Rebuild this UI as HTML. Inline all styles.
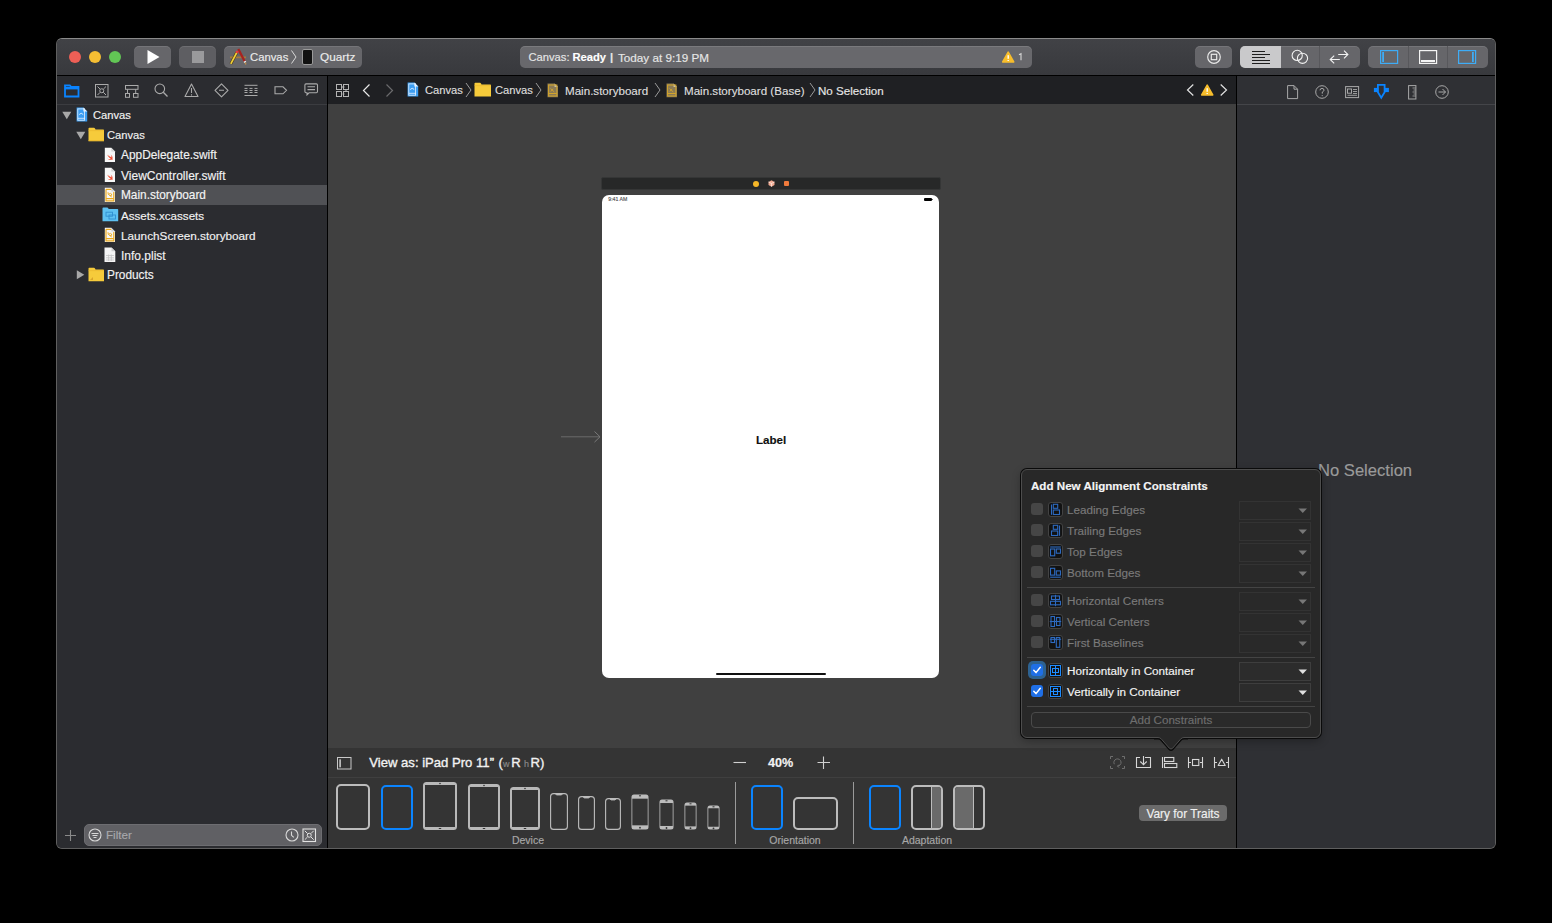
<!DOCTYPE html>
<html><head><meta charset="utf-8">
<style>
*{margin:0;padding:0;box-sizing:border-box}
html,body{width:1552px;height:923px;background:#000;overflow:hidden;font-family:"Liberation Sans",sans-serif}
.a{position:absolute}
#win{position:absolute;left:56px;top:38px;width:1440px;height:811px;border-radius:6px;overflow:hidden;background:#2b2c30;border:1px solid #5f5f5f;border-top-color:#8a8a8a}
.txt{white-space:nowrap;position:absolute;line-height:1;-webkit-text-stroke:0.15px currentColor}
svg{position:absolute;overflow:visible}
</style></head><body>
<div id="win">
  <!-- toolbar -->
  <div class="a" style="left:0;top:0;width:1438px;height:36px;background:linear-gradient(#414246,#38393d)"></div>
  <div class="a" style="left:0;top:36px;width:1438px;height:1px;background:#000"></div>
</div>
<!-- absolute page-coordinate layer -->
<div id="L" class="a" style="left:0;top:0;width:1552px;height:923px;clip-path:inset(39px 57px 75px 57px round 5px)">
  <!-- traffic lights -->
  <div class="a" style="left:69px;top:51px;width:12px;height:12px;border-radius:50%;background:#ed5f56"></div>
  <div class="a" style="left:89px;top:51px;width:12px;height:12px;border-radius:50%;background:#f5be33"></div>
  <div class="a" style="left:109px;top:51px;width:12px;height:12px;border-radius:50%;background:#62c655"></div>


  <!-- toolbar buttons -->
  <div class="a" style="left:134px;top:46px;width:37px;height:22px;border-radius:5px;background:#66666a;box-shadow:inset 0 1px 0 rgba(255,255,255,.1)"></div>
  <svg style="left:146px;top:49px" width="14" height="16"><path d="M1.5 1 L13.5 8 L1.5 15 Z" fill="#fff"/></svg>
  <div class="a" style="left:179px;top:46px;width:37px;height:22px;border-radius:5px;background:#5e5e62;box-shadow:inset 0 1px 0 rgba(255,255,255,.1)"></div>
  <div class="a" style="left:192px;top:51px;width:12px;height:12px;background:#9a9a9c"></div>
  <div class="a" style="left:224px;top:46px;width:138px;height:22px;border-radius:5px;background:#66666a;box-shadow:inset 0 1px 0 rgba(255,255,255,.1)"></div>
  <svg style="left:229px;top:48px" width="18" height="17">
    <path d="M1 9.3H17" stroke="#a57a3e" stroke-width="1.8"/>
    <path d="M9.3 1L15.6 13.2" stroke="#a8231f" stroke-width="2.3"/>
    <path d="M15.6 13.2L16.3 14.6" stroke="#f2f2f2" stroke-width="2.2"/>
    <path d="M16.3 14.6L16.8 16.5" stroke="#b88a4a" stroke-width="1.5"/>
    <path d="M7.8 4.5L1.8 15.8" stroke="#4a3210" stroke-width="2.8"/>
    <path d="M7.8 4.5L1.8 15.8" stroke="#f0d23a" stroke-width="1.7"/>
    <path d="M8.6 3L7.6 4.9" stroke="#e8353a" stroke-width="2.6"/>
  </svg>
  <div class="txt" style="left:250px;top:52px;font-size:11.3px;color:#ececec">Canvas</div>
  <svg style="left:291px;top:50px" width="6" height="14"><path d="M0.5 0.5 L5 7 L0.5 13.5" fill="none" stroke="#d8d8d8" stroke-width="1"/></svg>
  <div class="a" style="left:302px;top:49px;width:11px;height:16px;border-radius:2px;background:#111;border:1px solid #9a9a9a"></div>
  <div class="txt" style="left:320px;top:52px;font-size:11.8px;color:#ececec">Quartz</div>

  <!-- status -->
  <div class="a" style="left:520px;top:46px;width:512px;height:22px;border-radius:5px;background:#68686c;box-shadow:inset 0 1px 0 rgba(255,255,255,.12)"></div>
  <div class="txt" style="left:528.5px;top:52px;font-size:11.2px;color:#e6e6e6">Canvas:</div>
  <div class="txt" style="left:572.5px;top:52px;font-size:11.2px;color:#fff;font-weight:bold">Ready</div>
  <div class="txt" style="left:610px;top:52px;font-size:11.2px;color:#e8e8e8;font-weight:bold">|</div>
  <div class="txt" style="left:618px;top:52px;font-size:11.7px;color:#e6e6e6">Today at 9:19 PM</div>
  <svg style="left:1002px;top:51px" width="13" height="12"><path d="M6.2 1.2L11.7 11H0.7Z" fill="#f7bd2c" stroke="#f7bd2c" stroke-linejoin="round" stroke-width="1.6"/><rect x="5.5" y="4.2" width="1.4" height="3.6" fill="#fff"/><rect x="5.5" y="9" width="1.4" height="1" fill="#fff"/></svg>
  <svg style="left:1018px;top:53px" width="6" height="8"><path d="M1 1.8L3 0.6V7.2" fill="none" stroke="#d8d8d8" stroke-width="1.1"/></svg>

  <!-- library button -->
  <div class="a" style="left:1195px;top:46px;width:37px;height:22px;border-radius:5px;background:#66666a;box-shadow:inset 0 1px 0 rgba(255,255,255,.1)"></div>
  <svg style="left:1206px;top:49px" width="16" height="16"><circle cx="8" cy="8" r="6.3" fill="none" stroke="#e8e8e8" stroke-width="1.2"/><rect x="5.3" y="5.3" width="5.4" height="5.4" fill="none" stroke="#e8e8e8" stroke-width="1.2"/></svg>
  <!-- segmented 1 -->
  <div class="a" style="left:1240px;top:46px;width:120px;height:22px;border-radius:5px;background:#66666a;overflow:hidden;box-shadow:inset 0 1px 0 rgba(255,255,255,.1)">
    <div class="a" style="left:0;top:0;width:41px;height:22px;background:#c9c9cb"></div>
    <div class="a" style="left:79px;top:0;width:1px;height:22px;background:#58585c"></div>
  </div>
  <svg style="left:1240px;top:44px" width="120" height="26"><g fill="none" stroke-width="1.1">
  <path d="M12 7.5H25M12 10.5H30M12 13.5H25M12 16.5H30M12 19.5H30" stroke="#1e1e1e"/>
  <circle cx="57.2" cy="11.4" r="5.1" stroke="#f2f2f2"/><circle cx="62.5" cy="14.3" r="5.1" stroke="#f2f2f2"/>
  <path d="M98.2 10.5H107.8M104 6.6L107.9 10.5L104 14.4M99.8 15.5H90.2M94.2 11.6L90.2 15.5L94.2 19.4" stroke="#f2f2f2"/>
  </g></svg>
  <!-- segmented 2 -->
  <div class="a" style="left:1368px;top:46px;width:120px;height:22px;border-radius:5px;background:#66666a;box-shadow:inset 0 1px 0 rgba(255,255,255,.1)">
    <div class="a" style="left:40px;top:0;width:1px;height:22px;background:#58585c"></div>
    <div class="a" style="left:79px;top:0;width:1px;height:22px;background:#58585c"></div>
  </div>
  <svg style="left:1380px;top:50px" width="18" height="14"><rect x="0.6" y="0.6" width="17" height="12.8" fill="none" stroke="#3eacf6" stroke-width="1.2"/><rect x="2.2" y="2" width="1.8" height="10" fill="#3eacf6"/></svg>
  <svg style="left:1419px;top:50px" width="18" height="14"><rect x="0.6" y="0.6" width="17" height="12.8" fill="none" stroke="#f4f4f4" stroke-width="1.2"/><rect x="2" y="10" width="14" height="2" fill="#f4f4f4"/></svg>
  <svg style="left:1458px;top:50px" width="18" height="14"><rect x="0.6" y="0.6" width="17" height="12.8" fill="none" stroke="#3eacf6" stroke-width="1.2"/><rect x="14" y="2" width="1.8" height="10" fill="#3eacf6"/></svg>

  <!-- navigator -->
  <div class="a" style="left:57px;top:76px;width:270px;height:772px;background:#2b2c30"></div>
  <div class="a" style="left:57px;top:104px;width:270px;height:1px;background:#3b3c40"></div>
  <div class="a" style="left:57px;top:185px;width:270px;height:20px;background:#505155"></div>
  <div class="a" style="left:327px;top:76px;width:1px;height:772px;background:#000"></div>


  <!-- navigator tab icons -->
  <svg style="left:63px;top:83px" width="18" height="16"><path d="M2 2.4H6.8L8.2 3.8H15.5V13.5H2Z" fill="none" stroke="#0a84ff" stroke-width="1.8"/><rect x="2" y="3.8" width="13.5" height="2.6" fill="#0a84ff"/></svg>
  <svg style="left:95px;top:84px" width="14" height="14"><rect x="0.5" y="0.5" width="12.5" height="12.5" fill="none" stroke="#aaa" stroke-width="1"/><circle cx="6.75" cy="6.75" r="2" fill="none" stroke="#aaa" stroke-width="1"/><path d="M2.5 2.5L5.2 5.2M11 2.5L8.3 5.2M2.5 11L5.2 8.3M11 11L8.3 8.3" stroke="#aaa" stroke-width="1"/></svg>
  <svg style="left:125px;top:85px" width="14" height="13"><rect x="0.5" y="0.5" width="12.5" height="3.8" fill="none" stroke="#aaa"/><rect x="0.5" y="8.5" width="4" height="3.8" fill="none" stroke="#aaa"/><rect x="8.5" y="8.5" width="4.5" height="3.8" fill="none" stroke="#aaa"/><path d="M2.5 4.3V8.5M10.7 4.3V8.5" stroke="#aaa"/></svg>
  <svg style="left:154px;top:83px" width="15" height="15"><circle cx="5.8" cy="5.8" r="4.8" fill="none" stroke="#aaa" stroke-width="1.1"/><path d="M9.3 9.3L13.5 13.5" stroke="#aaa" stroke-width="1.3"/></svg>
  <svg style="left:184px;top:83px" width="15" height="15"><path d="M7.5 1L14 13.5H1Z" fill="none" stroke="#aaa" stroke-width="1.1" stroke-linejoin="round"/><path d="M7.5 5V10M7.5 11.3V12.5" stroke="#aaa" stroke-width="1.1"/></svg>
  <svg style="left:214px;top:83px" width="15" height="15"><path d="M7.5 0.8L14 7.3L7.5 13.8L1 7.3Z" fill="none" stroke="#aaa" stroke-width="1.1" stroke-linejoin="round"/><path d="M5 7.3H10" stroke="#aaa" stroke-width="1.1"/></svg>
  <svg style="left:244px;top:84px" width="15" height="13"><path d="M0.5 1.3H13.5M0.5 11.5H13.5M0.5 4.4H3.5M5.5 4.4H8.5M10.5 4.4H13.5M0.5 6.5H3.5M5.5 6.5H8.5M10.5 6.5H13.5M0.5 8.5H3.5M5.5 8.5H8.5M10.5 8.5H13.5" stroke="#aaa" stroke-width="1"/></svg>
  <svg style="left:274px;top:86px" width="15" height="9"><path d="M1 0.8H9L12.5 4.3L9 7.8H1Z" fill="none" stroke="#aaa" stroke-width="1.1"/></svg>
  <svg style="left:304px;top:83px" width="15" height="15"><path d="M2 0.9H12.3Q13.5 0.9 13.5 2.1V8.6Q13.5 9.8 12.3 9.8H5L3 11.8V9.8H2Q0.9 9.8 0.9 8.6V2.1Q0.9 0.9 2 0.9Z" fill="none" stroke="#aaa" stroke-width="1.1"/><path d="M3.5 3.7H11M3.5 6.6H11" stroke="#aaa" stroke-width="1.1"/></svg>

  <!-- tree -->
  <svg style="left:62px;top:111px" width="10" height="9"><path d="M0.3 0.8H9.3L4.8 8.3Z" fill="#a8a8a8"/></svg>
  <svg style="left:76px;top:107px" width="12" height="16"><path d="M0.6 0.6H7.4L11.2 4.4V14.6H0.6Z" fill="#3c9df1"/><path d="M7.4 0.6V4.4H11.2Z" fill="#eaf5ff"/><rect x="1.8" y="1.9" width="6.8" height="11.3" fill="none" stroke="#e8f3ff" stroke-width="0.8"/><path d="M2 11.3H9" stroke="#e8f3ff" stroke-width="0.8"/><path d="M3.2 7.5Q5.2 5 7.2 7.5" fill="none" stroke="#e8f3ff" stroke-width="0.9"/></svg>
  <div class="txt" style="left:93px;top:109.5px;font-size:11.2px;color:#f2f2f2">Canvas</div>

  <svg style="left:76px;top:131px" width="10" height="9"><path d="M0.3 0.8H9.3L4.8 8.3Z" fill="#a8a8a8"/></svg>
  <svg style="left:88px;top:127px" width="17" height="15"><path d="M0.5 1.5Q0.5 0.8 1.2 0.8H6Q6.6 0.8 7 1.5L7.5 2.5H15.3Q16 2.5 16 3.2V14.2H0.5Z" fill="#f6cb3b"/><path d="M0.5 3.6H16" stroke="#e7b52c" stroke-width="0.6"/><path d="M0.5 13.6H16" stroke="#e7b52c" stroke-width="0.8"/></svg>
  <div class="txt" style="left:107px;top:129.5px;font-size:11.2px;color:#f2f2f2">Canvas</div>

  <!-- swift files -->
  <svg style="left:104px;top:147px" width="12" height="16"><path d="M0.8 0.8H7.3L11 4.5V15H0.8Z" fill="#f7f7f7"/><path d="M7.3 0.8V4.5H11Z" fill="#d4d4d4"/><g transform="translate(2.3 6.6) scale(0.72)"><path d="M8.5 7.2C9.3 5.2 8.2 2.8 6 1.2C7 2.6 7.4 4.2 7 5.3C5.2 4.2 3 2.3 1.6 0.8C2.6 2.4 3.9 3.8 5 4.8C3.7 4.1 2.2 3 1 2C2.3 4 4.2 6 6.3 7.1C4.8 7.8 2.9 7.6 1.2 6.8C3 8.4 5.8 9.1 8 8.3C8.6 8.1 9.1 8.3 9.5 8.8C9.5 8.1 9.1 7.5 8.5 7.2Z" fill="#f04a2f"/></g></svg>
  <div class="txt" style="left:121px;top:149.5px;font-size:11.9px;color:#f2f2f2">AppDelegate.swift</div>
  <svg style="left:104px;top:167px" width="12" height="16"><path d="M0.8 0.8H7.3L11 4.5V15H0.8Z" fill="#f7f7f7"/><path d="M7.3 0.8V4.5H11Z" fill="#d4d4d4"/><g transform="translate(2.3 6.6) scale(0.72)"><path d="M8.5 7.2C9.3 5.2 8.2 2.8 6 1.2C7 2.6 7.4 4.2 7 5.3C5.2 4.2 3 2.3 1.6 0.8C2.6 2.4 3.9 3.8 5 4.8C3.7 4.1 2.2 3 1 2C2.3 4 4.2 6 6.3 7.1C4.8 7.8 2.9 7.6 1.2 6.8C3 8.4 5.8 9.1 8 8.3C8.6 8.1 9.1 8.3 9.5 8.8C9.5 8.1 9.1 7.5 8.5 7.2Z" fill="#f04a2f"/></g></svg>
  <div class="txt" style="left:121px;top:169.5px;font-size:12.0px;color:#f2f2f2">ViewController.swift</div>
  <!-- storyboard -->
  <svg style="left:104px;top:187px" width="12" height="16"><path d="M0.8 0.8H7.3L11 4.5V15H0.8Z" fill="#f7f7f7"/><path d="M2 2.3H7.5M2 2.3V13.8H9.8V5" fill="none" stroke="#eaaa1f" stroke-width="1.2"/><path d="M2 11.6H9.8" stroke="#eaaa1f" stroke-width="1.1"/><path d="M7.3 0.8V4.5H11Z" fill="#d4d4d4"/><path d="M4 5.2Q3.5 7.8 6 8.5Q8.2 9 7.6 7Q7 5.6 4.6 7.2M5.5 8.5L7.8 10" fill="none" stroke="#eaaa1f" stroke-width="0.9"/></svg>
  <div class="txt" style="left:121px;top:189.5px;font-size:11.85px;color:#f4f4f4">Main.storyboard</div>
  <!-- assets -->
  <svg style="left:102px;top:207px" width="17" height="15"><path d="M0.5 1.3Q0.5 0.5 1.3 0.5H5.5L6.8 2H15.5Q16.2 2 16.2 2.7V14.2H0.5Z" fill="#5ec1f1"/><rect x="4" y="5.2" width="6.5" height="4" fill="none" stroke="#2f8fd0" stroke-width="0.9"/><rect x="7" y="8" width="6.5" height="4" fill="none" stroke="#2f8fd0" stroke-width="0.9"/></svg>
  <div class="txt" style="left:121px;top:209.5px;font-size:11.6px;color:#f2f2f2">Assets.xcassets</div>
  <svg style="left:104px;top:227px" width="12" height="16"><path d="M0.8 0.8H7.3L11 4.5V15H0.8Z" fill="#f7f7f7"/><path d="M2 2.3H7.5M2 2.3V13.8H9.8V5" fill="none" stroke="#eaaa1f" stroke-width="1.2"/><path d="M2 11.6H9.8" stroke="#eaaa1f" stroke-width="1.1"/><path d="M7.3 0.8V4.5H11Z" fill="#d4d4d4"/><path d="M4 5.2Q3.5 7.8 6 8.5Q8.2 9 7.6 7Q7 5.6 4.6 7.2M5.5 8.5L7.8 10" fill="none" stroke="#eaaa1f" stroke-width="0.9"/></svg>
  <div class="txt" style="left:121px;top:229.5px;font-size:11.75px;color:#f2f2f2">LaunchScreen.storyboard</div>
  <!-- plist -->
  <svg style="left:104px;top:247px" width="12" height="16"><path d="M0.5 0.5H7.5L11.3 4.3V15H0.5Z" fill="#f4f4f4"/><path d="M7.5 0.5V4.3H11.3Z" fill="#cfcfcf"/><path d="M2 8.5H10M2 10.8H10M2 13H10M4.6 7.5V14M7.3 7.5V14" stroke="#c4c4c4" stroke-width="0.8"/></svg>
  <div class="txt" style="left:121px;top:249.5px;font-size:12.0px;color:#f2f2f2">Info.plist</div>
  <!-- products -->
  <svg style="left:76px;top:270px" width="9" height="10"><path d="M0.8 0.3V9.3L8.3 4.8Z" fill="#a8a8a8"/></svg>
  <svg style="left:88px;top:267px" width="17" height="15"><path d="M0.5 1.5Q0.5 0.8 1.2 0.8H6Q6.6 0.8 7 1.5L7.5 2.5H15.3Q16 2.5 16 3.2V14.2H0.5Z" fill="#f6cb3b"/><path d="M0.5 3.6H16" stroke="#e7b52c" stroke-width="0.6"/><path d="M2 13L5 10V13Z" fill="#d9a52a"/></svg>
  <div class="txt" style="left:107px;top:269.5px;font-size:11.85px;color:#f2f2f2">Products</div>

  <!-- filter bar -->
  <svg style="left:64px;top:829px" width="13" height="13"><path d="M6.5 1V12M1 6.5H12" stroke="#8a8a8a" stroke-width="1.1"/></svg>
  <div class="a" style="left:84px;top:824px;width:238px;height:22px;border-radius:5px;background:#606064;border:1px solid #6d6d71"></div>
  <svg style="left:88px;top:828px" width="15" height="15"><circle cx="7" cy="7" r="6" fill="none" stroke="#d8d8d8" stroke-width="1.1"/><path d="M3.5 5.5H10.5M4.5 7.5H9.5M5.5 9.5H8.5" stroke="#d8d8d8" stroke-width="1"/></svg>
  <div class="txt" style="left:106px;top:829px;font-size:11.6px;color:#a8a8ac">Filter</div>
  <svg style="left:285px;top:828px" width="15" height="15"><circle cx="7" cy="7" r="6" fill="none" stroke="#d8d8d8" stroke-width="1.1"/><path d="M6.5 3.5V7.3L8.8 9.3" fill="none" stroke="#d8d8d8" stroke-width="1.1"/></svg>
  <svg style="left:302px;top:828px" width="15" height="15"><rect x="1" y="1" width="12.5" height="12.5" fill="none" stroke="#e2e2e2" stroke-width="1.1"/><circle cx="7.25" cy="7.25" r="2" fill="none" stroke="#e2e2e2" stroke-width="1"/><path d="M2.8 2.8L5.5 5.5M11.7 2.8L9 5.5M2.8 11.7L5.5 9M11.7 11.7L9 9" stroke="#e2e2e2" stroke-width="1"/></svg>

  <!-- jump bar -->
  <div class="a" style="left:328px;top:76px;width:908px;height:28px;background:#1f2023"></div>
  <!-- canvas -->
  <div class="a" style="left:328px;top:104px;width:908px;height:644px;background:#404040"></div>
  <!-- bottom bar -->
  <div class="a" style="left:328px;top:748px;width:908px;height:100px;background:#343434"></div>
  <div class="a" style="left:328px;top:777px;width:908px;height:1px;background:#3f3f3f"></div>


  <!-- jump bar content -->
  <svg style="left:336px;top:84px" width="14" height="14"><rect x="0.5" y="0.5" width="5" height="5" fill="none" stroke="#b4b4b4"/><rect x="7.5" y="0.5" width="5" height="5" fill="none" stroke="#b4b4b4"/><rect x="0.5" y="7.5" width="5" height="5" fill="none" stroke="#b4b4b4"/><rect x="7.5" y="7.5" width="5" height="5" fill="none" stroke="#b4b4b4"/><path d="M5.5 3H8.5M6.5 10H8.5M10 5.5V8" stroke="#b4b4b4"/></svg>
  <svg style="left:362px;top:83px" width="9" height="15"><path d="M7.5 1.5L1.5 7.5L7.5 13.5" fill="none" stroke="#e8e8e8" stroke-width="1.2"/></svg>
  <svg style="left:385px;top:83px" width="9" height="15"><path d="M1.5 1.5L7.5 7.5L1.5 13.5" fill="none" stroke="#6a6a6c" stroke-width="1.2"/></svg>
  <svg style="left:407px;top:82px" width="12" height="16"><path d="M0.6 0.6H7.4L11.2 4.4V14.6H0.6Z" fill="#3c9df1"/><path d="M7.4 0.6V4.4H11.2Z" fill="#eaf5ff"/><rect x="1.8" y="1.9" width="6.8" height="11.3" fill="none" stroke="#e8f3ff" stroke-width="0.8"/><path d="M2 11.3H9" stroke="#e8f3ff" stroke-width="0.8"/><path d="M3.2 7.5Q5.2 5 7.2 7.5" fill="none" stroke="#e8f3ff" stroke-width="0.9"/></svg>
  <div class="txt" style="left:425px;top:85px;font-size:11.2px;color:#dedede">Canvas</div>
  <svg style="left:465px;top:82px" width="8" height="16"><path d="M1 1L6 8L1 15" fill="none" stroke="#9a9a9a" stroke-width="1"/></svg>
  <svg style="left:474px;top:82px" width="18" height="16"><path d="M0.5 1.5Q0.5 0.8 1.2 0.8H6Q6.6 0.8 7 1.5L7.5 2.5H16.3Q17 2.5 17 3.2V14.5H0.5Z" fill="#f6cb3b"/><path d="M0.5 3.6H17" stroke="#e7b52c" stroke-width="0.6"/></svg>
  <div class="txt" style="left:495px;top:85px;font-size:11.2px;color:#dedede">Canvas</div>
  <svg style="left:535px;top:82px" width="8" height="16"><path d="M1 1L6 8L1 15" fill="none" stroke="#9a9a9a" stroke-width="1"/></svg>
  <svg style="left:547px;top:83px" width="12" height="15"><path d="M0.5 0.5H7.5L11 4V14.3H0.5Z" fill="#8a7a55"/><path d="M7.5 0.5V4H11Z" fill="#c9c0a8"/><rect x="1.6" y="2" width="8.3" height="11" fill="none" stroke="#d4a52a" stroke-width="1"/><path d="M1.6 10.5H9.9" stroke="#d4a52a"/><path d="M3.5 5.5L7.3 9M3.8 8.5L6 5.8" stroke="#d4a52a" stroke-width="0.9"/></svg>
  <div class="txt" style="left:565px;top:84.5px;font-size:11.6px;color:#dedede">Main.storyboard</div>
  <svg style="left:654px;top:82px" width="8" height="16"><path d="M1 1L6 8L1 15" fill="none" stroke="#9a9a9a" stroke-width="1"/></svg>
  <svg style="left:666px;top:83px" width="12" height="15"><path d="M0.5 0.5H7.5L11 4V14.3H0.5Z" fill="#8a7a55"/><path d="M7.5 0.5V4H11Z" fill="#c9c0a8"/><rect x="1.6" y="2" width="8.3" height="11" fill="none" stroke="#d4a52a" stroke-width="1"/><path d="M1.6 10.5H9.9" stroke="#d4a52a"/><path d="M3.5 5.5L7.3 9M3.8 8.5L6 5.8" stroke="#d4a52a" stroke-width="0.9"/></svg>
  <div class="txt" style="left:684px;top:84.5px;font-size:11.6px;color:#dedede">Main.storyboard (Base)</div>
  <svg style="left:809px;top:82px" width="8" height="16"><path d="M1 1L6 8L1 15" fill="none" stroke="#9a9a9a" stroke-width="1"/></svg>
  <div class="txt" style="left:818px;top:84.5px;font-size:11.6px;color:#e6e6e6">No Selection</div>
  <svg style="left:1186px;top:83px" width="9" height="14"><path d="M7.3 1.5L1.5 7L7.3 12.5" fill="none" stroke="#e0e0e0" stroke-width="1.2"/></svg>
  <svg style="left:1201px;top:84px" width="13" height="12"><path d="M6.2 1.2L11.7 11H0.7Z" fill="#f7bd2c" stroke="#f7bd2c" stroke-linejoin="round" stroke-width="1.6"/><rect x="5.5" y="4.2" width="1.4" height="3.6" fill="#fff"/><rect x="5.5" y="9" width="1.4" height="1" fill="#fff"/></svg>
  <svg style="left:1219px;top:83px" width="9" height="14"><path d="M1.7 1.5L7.5 7L1.7 12.5" fill="none" stroke="#e0e0e0" stroke-width="1.2"/></svg>

  <!-- scene -->
  <div class="a" style="left:601px;top:177px;width:340px;height:13px;border-radius:2px;background:#272828;border:1px solid #353636"></div>
  <div class="a" style="left:753px;top:181px;width:6px;height:6px;border-radius:50%;background:#f6b728"></div>
  <svg style="left:768px;top:180px" width="7" height="7"><path d="M3.5 0.3L6.5 1.9V5.1L3.5 6.7L0.5 5.1V1.9Z" fill="#f0a890"/><path d="M0.5 1.9L3.5 3.5L6.5 1.9M3.5 3.5V6.7" fill="none" stroke="#fff" stroke-width="0.6"/></svg>
  <div class="a" style="left:784px;top:181px;width:5px;height:5px;border-radius:1px;background:#f07a3c"></div>
  <div class="a" style="left:602px;top:195px;width:337px;height:483px;border-radius:7px;background:#fff"></div>
  <div class="txt" style="left:608.3px;top:197.3px;font-size:5.2px;color:#555">9:41 AM</div>
  <div class="a" style="left:924px;top:198px;width:8px;height:3px;border-radius:1px;background:#000"></div>
  <div class="a" style="left:932px;top:199px;width:1px;height:1px;background:#666"></div>
  <div class="txt" style="left:756px;top:434px;font-size:11.6px;color:#111;font-weight:bold">Label</div>
  <div class="a" style="left:716px;top:673px;width:110px;height:2px;border-radius:1px;background:#111"></div>
  <svg style="left:560px;top:430px" width="44" height="14"><path d="M1 6.8H40" stroke="#6a6a6a" stroke-width="1"/><path d="M34.5 1.5L40 6.8L34.5 12.1" fill="none" stroke="#7a7a7a" stroke-width="1"/></svg>


  <!-- bottom bar content -->
  <svg style="left:337px;top:757px" width="15" height="13"><rect x="0.5" y="0.5" width="13.5" height="11.5" fill="none" stroke="#c8c8c8" stroke-width="1"/><rect x="2.3" y="2.3" width="1.6" height="8" fill="#c8c8c8"/></svg>
  <div class="txt" style="left:369.3px;top:755.5px;font-size:13.1px;color:#f2f2f2;-webkit-text-stroke:0.35px #f2f2f2">View as: iPad Pro 11”</div>
  <div class="txt" style="left:498.5px;top:755.5px;font-size:13.1px;color:#f2f2f2;-webkit-text-stroke:0.35px #f2f2f2">(</div>
  <div class="txt" style="left:503px;top:759.5px;font-size:9px;color:#8a8a8a">w</div>
  <div class="txt" style="left:511.2px;top:755.5px;font-size:13.1px;color:#f2f2f2;-webkit-text-stroke:0.35px #f2f2f2">R</div>
  <div class="txt" style="left:524px;top:759.5px;font-size:9px;color:#8a8a8a">h</div>
  <div class="txt" style="left:530.5px;top:755.5px;font-size:13.1px;color:#f2f2f2;-webkit-text-stroke:0.35px #f2f2f2">R)</div>
  <svg style="left:733px;top:756px" width="14" height="13"><path d="M0.5 6.5H13" stroke="#d0d0d0" stroke-width="1.1"/></svg>
  <div class="txt" style="left:768px;top:756.5px;font-size:12.6px;color:#f2f2f2;font-weight:bold">40%</div>
  <svg style="left:817px;top:756px" width="14" height="14"><path d="M6.5 0.5V13M0.5 6.5H13" stroke="#d0d0d0" stroke-width="1.1"/></svg>
  <svg style="left:1109px;top:755px" width="17" height="15"><path d="M1.5 4V1.5H4M13 1.5H15.5V4M15.5 11V13.5H13M4 13.5H1.5V11" fill="none" stroke="#6e6e6e" stroke-width="1"/><path d="M8.5 11.1A3.6 3.6 0 1 0 5.3 9.2" fill="none" stroke="#6e6e6e" stroke-width="1"/><path d="M10 9.6L8.5 11.1L10 12.6" fill="none" stroke="#6e6e6e" stroke-width="1"/></svg>
  <svg style="left:1130px;top:750px" width="105" height="25"><g fill="none" stroke="#d6d6d6" stroke-width="1.1">
  <path d="M10 7.5H6.5V17.5H20.5V7.5H15"/><path d="M13.5 6V14.8M10.3 11.5L13.5 14.8L16.7 11.5"/>
  <path d="M32.5 7V18"/><rect x="34.5" y="7.5" width="9.3" height="4"/><rect x="34.5" y="13.5" width="12.3" height="4"/>
  <path d="M58.5 7V18M72.5 7V18M58.5 12.5H61M70 12.5H72.5"/><rect x="62.5" y="9.5" width="6.3" height="6"/>
  <path d="M84.5 7V18M98.5 7V18M84.5 12.5H87M96 12.5H98.5"/><path d="M91.7 9.2L95.2 15.5H88.2Z" stroke-linejoin="round"/>
  </g></svg>
  <div class="a" style="left:336px;top:784px;width:34px;height:46px;border-radius:5px;border:2.2px solid #bcbcbc"></div>
  <div class="a" style="left:381px;top:785px;width:32px;height:45px;border-radius:5px;border:2.2px solid #0a84ff"></div>
  <svg style="left:423px;top:782px" width="34" height="48"><rect x="0" y="0" width="34" height="48" rx="3.5" fill="#b8b8b8"/><rect x="2" y="3" width="30" height="42" fill="#343434"/><circle cx="17.0" cy="1.5" r="0.8" fill="#343434"/><rect x="15.7" y="46" width="2.6" height="1" rx="0.5" fill="#343434"/></svg>
  <svg style="left:468px;top:784px" width="32" height="46"><rect x="0" y="0" width="32" height="46" rx="3.5" fill="#b8b8b8"/><rect x="2" y="3" width="28" height="40" fill="#343434"/><circle cx="16.0" cy="1.5" r="0.8" fill="#343434"/><rect x="14.7" y="44" width="2.6" height="1" rx="0.5" fill="#343434"/></svg>
  <svg style="left:510px;top:787px" width="30" height="43"><rect x="0" y="0" width="30" height="43" rx="3.5" fill="#b8b8b8"/><rect x="2" y="3" width="26" height="37" fill="#343434"/><circle cx="15.0" cy="1.5" r="0.8" fill="#343434"/><rect x="13.7" y="41" width="2.6" height="1" rx="0.5" fill="#343434"/></svg>
  <svg style="left:550px;top:793px" width="18" height="37"><rect x="0.6" y="0.6" width="16.8" height="35.8" rx="3" fill="none" stroke="#bcbcbc" stroke-width="1.1"/><path d="M5.3999999999999995 0.9H12.6L11.16 2H6.84Z" fill="#bcbcbc" stroke="#bcbcbc" stroke-width="0.8"/></svg>
  <svg style="left:578px;top:796px" width="17" height="34"><rect x="0.6" y="0.6" width="15.8" height="32.8" rx="3" fill="none" stroke="#bcbcbc" stroke-width="1.1"/><path d="M5.1 0.9H11.899999999999999L10.54 2H6.46Z" fill="#bcbcbc" stroke="#bcbcbc" stroke-width="0.8"/></svg>
  <svg style="left:605px;top:798px" width="16" height="32"><rect x="0.6" y="0.6" width="14.8" height="30.8" rx="3" fill="none" stroke="#bcbcbc" stroke-width="1.1"/><path d="M4.8 0.9H11.2L9.92 2H6.08Z" fill="#bcbcbc" stroke="#bcbcbc" stroke-width="0.8"/></svg>
  <svg style="left:631px;top:794px" width="18" height="36"><rect x="0.5" y="0.5" width="17" height="35" rx="2.5" fill="#bcbcbc"/><rect x="1.3" y="4.68" width="15.4" height="26.64" fill="#343434"/><rect x="8.0" y="1.3" width="2" height="1" fill="#343434"/><circle cx="9.0" cy="33.66" r="0.9" fill="#343434"/></svg>
  <svg style="left:659px;top:799px" width="15" height="31"><rect x="0.5" y="0.5" width="14" height="30" rx="2.5" fill="#bcbcbc"/><rect x="1.3" y="4.03" width="12.4" height="22.94" fill="#343434"/><rect x="6.5" y="1.3" width="2" height="1" fill="#343434"/><circle cx="7.5" cy="28.985" r="0.9" fill="#343434"/></svg>
  <svg style="left:684px;top:802px" width="13" height="28"><rect x="0.5" y="0.5" width="12" height="27" rx="2.5" fill="#bcbcbc"/><rect x="1.3" y="3.64" width="10.4" height="20.72" fill="#343434"/><rect x="5.5" y="1.3" width="2" height="1" fill="#343434"/><circle cx="6.5" cy="26.18" r="0.9" fill="#343434"/></svg>
  <svg style="left:707px;top:805px" width="13" height="25"><rect x="0.5" y="0.5" width="12" height="24" rx="2.5" fill="#bcbcbc"/><rect x="1.3" y="3.25" width="10.4" height="18.5" fill="#343434"/><rect x="5.5" y="1.3" width="2" height="1" fill="#343434"/><circle cx="6.5" cy="23.375" r="0.9" fill="#343434"/></svg>
  <div class="a" style="left:735px;top:782px;width:1px;height:62px;background:#9a9a9a"></div>
  <div class="a" style="left:853px;top:782px;width:1px;height:62px;background:#9a9a9a"></div>
  <div class="txt" style="left:528px;top:835px;font-size:10.5px;color:#a8a8a8;transform:translateX(-50%)">Device</div>
  <div class="txt" style="left:795px;top:835px;font-size:10.5px;color:#a8a8a8;transform:translateX(-50%)">Orientation</div>
  <div class="txt" style="left:927px;top:835px;font-size:10.5px;color:#a8a8a8;transform:translateX(-50%)">Adaptation</div>
  <div class="a" style="left:751px;top:785px;width:32px;height:45px;border-radius:5px;border:2.2px solid #0a84ff"></div>
  <div class="a" style="left:793px;top:797px;width:45px;height:33px;border-radius:5px;border:2.2px solid #bcbcbc"></div>
  <div class="a" style="left:869px;top:785px;width:32px;height:45px;border-radius:5px;border:2.2px solid #0a84ff"></div>
  <div class="a" style="left:911px;top:785px;width:32px;height:45px;border-radius:5px;border:2.2px solid #bcbcbc;overflow:hidden"><div class="a" style="left:18px;top:0;width:1.3px;height:41px;background:#bcbcbc"></div><div class="a" style="left:19.3px;top:0;width:10px;height:41px;background:#6a6a6a"></div></div>
  <div class="a" style="left:953px;top:785px;width:32px;height:45px;border-radius:5px;border:2.2px solid #bcbcbc;overflow:hidden"><div class="a" style="left:0;top:0;width:17.5px;height:41px;background:#6a6a6a"></div><div class="a" style="left:17.5px;top:0;width:1.3px;height:41px;background:#bcbcbc"></div></div>
  <div class="a" style="left:1139px;top:805px;width:88px;height:16px;border-radius:4px;background:#6b6b6b"></div>
  <div class="txt" style="left:1139px;top:808.5px;width:88px;text-align:center;font-size:11.9px;color:#f0f0f0">Vary for Traits</div>

  <!-- inspector -->
  <div class="a" style="left:1236px;top:76px;width:1px;height:772px;background:#000"></div>
  <div class="a" style="left:1237px;top:76px;width:258px;height:772px;background:#2f3034"></div>
  <div class="a" style="left:1237px;top:104px;width:258px;height:1px;background:#444549"></div>

  <!-- inspector content -->
  <svg style="left:1287px;top:85px" width="12" height="15"><path d="M0.6 0.6H7L10.6 4.2V13.6H0.6Z M7 0.6V4.2H10.6" fill="none" stroke="#a8a8a8" stroke-width="1"/></svg>
  <svg style="left:1314.5px;top:85px" width="15" height="15"><circle cx="7" cy="7" r="6.3" fill="none" stroke="#a8a8a8" stroke-width="1"/><path d="M5 5.3Q5 3.4 7 3.4Q9 3.4 9 5.2Q9 6.3 7.3 7V8.6" fill="none" stroke="#a8a8a8" stroke-width="1"/><circle cx="7.2" cy="10.6" r="0.6" fill="#a8a8a8"/></svg>
  <svg style="left:1344.5px;top:85.5px" width="15" height="13"><rect x="0.6" y="0.6" width="13" height="11" fill="none" stroke="#a8a8a8" stroke-width="1"/><rect x="2.5" y="3" width="4" height="4.2" fill="none" stroke="#a8a8a8" stroke-width="1"/><path d="M8 3.5H12M8 5.5H12M8 7.5H12M2.5 9.3H12" stroke="#a8a8a8" stroke-width="0.9"/></svg>
  <svg style="left:1373px;top:84px" width="17" height="16"><path d="M4.9 0.9H11.6V8.3L8.25 13.8L4.9 8.3Z" fill="none" stroke="#0a84ff" stroke-width="1.8" stroke-linejoin="miter"/><rect x="0.9" y="3.9" width="4.5" height="4.2" fill="#0a84ff"/><rect x="11.1" y="3.9" width="4.8" height="4.2" fill="#0a84ff"/></svg>
  <svg style="left:1407.5px;top:85px" width="9" height="15"><rect x="0.6" y="0.6" width="7.3" height="13.4" fill="none" stroke="#a8a8a8" stroke-width="1"/><path d="M4.5 3H7.8M5.5 5H7.8M4.5 7H7.8M5.5 9H7.8M4.5 11H7.8" stroke="#a8a8a8" stroke-width="0.8"/></svg>
  <svg style="left:1434.5px;top:85px" width="15" height="15"><circle cx="7" cy="7" r="6.3" fill="none" stroke="#a8a8a8" stroke-width="1"/><path d="M3.5 7H10.5M7.5 4L10.5 7L7.5 10" fill="none" stroke="#a8a8a8" stroke-width="1"/></svg>
  <div class="txt" style="left:1318px;top:463px;font-size:16.6px;color:#9a9a9a">No Selection</div>

  <!-- popover -->
  <div class="a" style="left:1021px;top:469px;width:300px;height:269px;border-radius:6px;background:#282828;border:1px solid #4d4d4d;box-shadow:0 0 0 1px #0a0a0a,0 3px 10px rgba(0,0,0,.3)"></div>
  <svg style="left:1154px;top:735px" width="34" height="18"><path d="M0 2.5H4Q6 2.5 7.5 4.2L15.3 13.2Q17 15 18.7 13.2L26.5 4.2Q28 2.5 30 2.5H34" fill="none" stroke="#0a0a0a" stroke-width="2.2" transform="translate(0 0.9)"/><path d="M0 2.5H4Q6 2.5 7.5 4.2L15.3 13.2Q17 15 18.7 13.2L26.5 4.2Q28 2.5 30 2.5H34V0H0Z" fill="#282828"/><path d="M0 2.5H4Q6 2.5 7.5 4.2L15.3 13.2Q17 15 18.7 13.2L26.5 4.2Q28 2.5 30 2.5H34" fill="none" stroke="#4d4d4d" stroke-width="1"/></svg>
  <div class="txt" style="left:1031px;top:480px;font-size:11.6px;color:#f4f4f4;font-weight:bold">Add New Alignment Constraints</div>
  <div class="a" style="left:1027px;top:587px;width:288px;height:1px;background:#444"></div>
  <div class="a" style="left:1027px;top:657px;width:288px;height:1px;background:#444"></div>
  <div class="a" style="left:1027px;top:706px;width:288px;height:1px;background:#444"></div>
  <div class="a" style="left:1031px;top:712px;width:280px;height:16px;border-radius:4px;border:1px solid #4a4a4a;background:#2a2a2a"></div>
  <div class="txt" style="left:1031px;top:713.5px;width:280px;text-align:center;font-size:11.6px;color:#6e6e6e">Add Constraints</div>
  <div class="a" style="left:1031px;top:503px;width:12px;height:12px;border-radius:3px;background:#464646"></div>
  <div class="a" style="left:1048px;top:501.5px;width:15px;height:15px;border-radius:3px;background:#121212;border:1px solid #434343"></div>
  <svg style="left:1048px;top:501.5px" width="15" height="15"><path d="M3.5 2.5V12.8" stroke="#2d6ac0" stroke-width="1.1"/><rect x="5.3" y="2.3" width="4.4" height="4" fill="none" stroke="#2d6ac0" stroke-width="1.1"/><rect x="5.3" y="8" width="6.2" height="4.5" fill="none" stroke="#2d6ac0" stroke-width="1.1"/></svg>
  <div class="txt" style="left:1067px;top:504.4px;font-size:11.7px;color:#7a7a7a">Leading Edges</div>
  <div class="a" style="left:1239px;top:501px;width:72px;height:19px;border:1px solid #333;background:#292929"></div>
  <svg style="left:1298px;top:508px" width="10" height="6"><path d="M0.5 0.5H9L4.75 5Z" fill="#777"/></svg>
  <div class="a" style="left:1031px;top:524px;width:12px;height:12px;border-radius:3px;background:#464646"></div>
  <div class="a" style="left:1048px;top:522.5px;width:15px;height:15px;border-radius:3px;background:#121212;border:1px solid #434343"></div>
  <svg style="left:1048px;top:522.5px" width="15" height="15"><path d="M11.5 2.5V12.8" stroke="#2d6ac0" stroke-width="1.1"/><rect x="5.3" y="2.3" width="4.4" height="4" fill="none" stroke="#2d6ac0" stroke-width="1.1"/><rect x="3.5" y="8" width="6.2" height="4.5" fill="none" stroke="#2d6ac0" stroke-width="1.1"/></svg>
  <div class="txt" style="left:1067px;top:525.4px;font-size:11.7px;color:#7a7a7a">Trailing Edges</div>
  <div class="a" style="left:1239px;top:522px;width:72px;height:19px;border:1px solid #333;background:#292929"></div>
  <svg style="left:1298px;top:529px" width="10" height="6"><path d="M0.5 0.5H9L4.75 5Z" fill="#777"/></svg>
  <div class="a" style="left:1031px;top:545px;width:12px;height:12px;border-radius:3px;background:#464646"></div>
  <div class="a" style="left:1048px;top:543.5px;width:15px;height:15px;border-radius:3px;background:#121212;border:1px solid #434343"></div>
  <svg style="left:1048px;top:543.5px" width="15" height="15"><path d="M2.2 3H12.8" stroke="#2d6ac0" stroke-width="1.1"/><rect x="2.5" y="5" width="4.2" height="6.8" fill="none" stroke="#2d6ac0" stroke-width="1.1"/><rect x="8.3" y="5" width="4.2" height="4.2" fill="none" stroke="#2d6ac0" stroke-width="1.1"/></svg>
  <div class="txt" style="left:1067px;top:546.4px;font-size:11.7px;color:#7a7a7a">Top Edges</div>
  <div class="a" style="left:1239px;top:543px;width:72px;height:19px;border:1px solid #333;background:#292929"></div>
  <svg style="left:1298px;top:550px" width="10" height="6"><path d="M0.5 0.5H9L4.75 5Z" fill="#777"/></svg>
  <div class="a" style="left:1031px;top:566px;width:12px;height:12px;border-radius:3px;background:#464646"></div>
  <div class="a" style="left:1048px;top:564.5px;width:15px;height:15px;border-radius:3px;background:#121212;border:1px solid #434343"></div>
  <svg style="left:1048px;top:564.5px" width="15" height="15"><path d="M2.2 12.2H12.8" stroke="#2d6ac0" stroke-width="1.1"/><rect x="2.5" y="3.3" width="4.2" height="6.8" fill="none" stroke="#2d6ac0" stroke-width="1.1"/><rect x="8.3" y="5.9" width="4.2" height="4.2" fill="none" stroke="#2d6ac0" stroke-width="1.1"/></svg>
  <div class="txt" style="left:1067px;top:567.4px;font-size:11.7px;color:#7a7a7a">Bottom Edges</div>
  <div class="a" style="left:1239px;top:564px;width:72px;height:19px;border:1px solid #333;background:#292929"></div>
  <svg style="left:1298px;top:571px" width="10" height="6"><path d="M0.5 0.5H9L4.75 5Z" fill="#777"/></svg>
  <div class="a" style="left:1031px;top:594px;width:12px;height:12px;border-radius:3px;background:#464646"></div>
  <div class="a" style="left:1048px;top:592.5px;width:15px;height:15px;border-radius:3px;background:#121212;border:1px solid #434343"></div>
  <svg style="left:1048px;top:592.5px" width="15" height="15"><path d="M7.5 1.8V13.2" stroke="#2d6ac0" stroke-width="1.1"/><rect x="3.5" y="3" width="8" height="3.5" fill="none" stroke="#2d6ac0" stroke-width="1.1"/><rect x="2.5" y="8.3" width="10" height="3.5" fill="none" stroke="#2d6ac0" stroke-width="1.1"/></svg>
  <div class="txt" style="left:1067px;top:595.4px;font-size:11.7px;color:#7a7a7a">Horizontal Centers</div>
  <div class="a" style="left:1239px;top:592px;width:72px;height:19px;border:1px solid #333;background:#292929"></div>
  <svg style="left:1298px;top:599px" width="10" height="6"><path d="M0.5 0.5H9L4.75 5Z" fill="#777"/></svg>
  <div class="a" style="left:1031px;top:615px;width:12px;height:12px;border-radius:3px;background:#464646"></div>
  <div class="a" style="left:1048px;top:613.5px;width:15px;height:15px;border-radius:3px;background:#121212;border:1px solid #434343"></div>
  <svg style="left:1048px;top:613.5px" width="15" height="15"><path d="M1.8 7.5H13.2" stroke="#2d6ac0" stroke-width="1.1"/><rect x="3" y="2.5" width="3.5" height="10" fill="none" stroke="#2d6ac0" stroke-width="1.1"/><rect x="8.5" y="3.5" width="3.5" height="8" fill="none" stroke="#2d6ac0" stroke-width="1.1"/></svg>
  <div class="txt" style="left:1067px;top:616.4px;font-size:11.7px;color:#7a7a7a">Vertical Centers</div>
  <div class="a" style="left:1239px;top:613px;width:72px;height:19px;border:1px solid #333;background:#292929"></div>
  <svg style="left:1298px;top:620px" width="10" height="6"><path d="M0.5 0.5H9L4.75 5Z" fill="#777"/></svg>
  <div class="a" style="left:1031px;top:636px;width:12px;height:12px;border-radius:3px;background:#464646"></div>
  <div class="a" style="left:1048px;top:634.5px;width:15px;height:15px;border-radius:3px;background:#121212;border:1px solid #434343"></div>
  <svg style="left:1048px;top:634.5px" width="15" height="15"><path d="M1.8 4.3H13.2" stroke="#2d6ac0" stroke-width="1.1"/><rect x="3" y="2.5" width="3.5" height="5" fill="none" stroke="#2d6ac0" stroke-width="1.1"/><rect x="8.3" y="2.5" width="3.5" height="9.8" fill="none" stroke="#2d6ac0" stroke-width="1.1"/></svg>
  <div class="txt" style="left:1067px;top:637.4px;font-size:11.7px;color:#7a7a7a">First Baselines</div>
  <div class="a" style="left:1239px;top:634px;width:72px;height:19px;border:1px solid #333;background:#292929"></div>
  <svg style="left:1298px;top:641px" width="10" height="6"><path d="M0.5 0.5H9L4.75 5Z" fill="#777"/></svg>
  <div class="a" style="left:1028px;top:661px;width:18px;height:18px;border-radius:5px;background:#2d6291"></div>
  <div class="a" style="left:1031px;top:664px;width:12px;height:12px;border-radius:3px;background:#1f6fe6"></div>
  <svg style="left:1031px;top:664px" width="12" height="12"><path d="M2.8 6.2L5 8.6L9.3 3.3" fill="none" stroke="#fff" stroke-width="1.5" stroke-linecap="round" stroke-linejoin="round"/></svg>
  <div class="a" style="left:1048px;top:662.5px;width:15px;height:15px;border-radius:3px;background:#121212;border:1px solid #434343"></div>
  <svg style="left:1048px;top:662.5px" width="15" height="15"><rect x="2.5" y="2.5" width="10" height="10" fill="none" stroke="#1f8cff" stroke-width="1"/><rect x="4.5" y="5.5" width="6" height="4" fill="none" stroke="#1f8cff" stroke-width="1"/><path d="M7.5 2.5V12.5" stroke="#1f8cff" stroke-width="1"/></svg>
  <div class="txt" style="left:1067px;top:665.4px;font-size:11.7px;color:#f4f4f4">Horizontally in Container</div>
  <div class="a" style="left:1239px;top:662px;width:72px;height:19px;border:1px solid #3e3e3e;background:#2c2c2c"></div>
  <svg style="left:1298px;top:669px" width="10" height="6"><path d="M0.5 0.5H9L4.75 5Z" fill="#e0e0e0"/></svg>
  <div class="a" style="left:1031px;top:685px;width:12px;height:12px;border-radius:3px;background:#1f6fe6"></div>
  <svg style="left:1031px;top:685px" width="12" height="12"><path d="M2.8 6.2L5 8.6L9.3 3.3" fill="none" stroke="#fff" stroke-width="1.5" stroke-linecap="round" stroke-linejoin="round"/></svg>
  <div class="a" style="left:1048px;top:683.5px;width:15px;height:15px;border-radius:3px;background:#121212;border:1px solid #434343"></div>
  <svg style="left:1048px;top:683.5px" width="15" height="15"><rect x="2.5" y="2.5" width="10" height="10" fill="none" stroke="#1f8cff" stroke-width="1"/><rect x="5.5" y="4.5" width="4" height="6" fill="none" stroke="#1f8cff" stroke-width="1"/><path d="M2.5 7.5H12.5" stroke="#1f8cff" stroke-width="1"/></svg>
  <div class="txt" style="left:1067px;top:686.4px;font-size:11.7px;color:#f4f4f4">Vertically in Container</div>
  <div class="a" style="left:1239px;top:683px;width:72px;height:19px;border:1px solid #3e3e3e;background:#2c2c2c"></div>
  <svg style="left:1298px;top:690px" width="10" height="6"><path d="M0.5 0.5H9L4.75 5Z" fill="#e0e0e0"/></svg>
</div>
</body></html>
